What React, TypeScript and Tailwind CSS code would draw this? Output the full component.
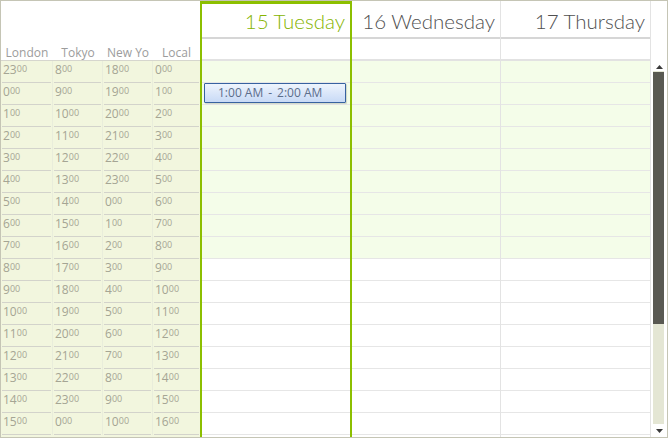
import React from 'react'

const ZONES = [
  { name: 'London', offset: 23, width: 'w-[52px] border-r border-[#e9eddb]' },
  { name: 'Tokyo', offset: 8, width: 'w-[50px] border-r border-[#e9eddb]' },
  { name: 'New York', offset: 18, width: 'w-[50px] border-r border-[#e9eddb]' },
  { name: 'Local', offset: 0, width: 'flex-1' },
]

const DAYS = [
  { title: '15 Tuesday', today: true, col: 'w-[152px] border-x-2 border-[#8cbf00]' },
  { title: '16 Wednesday', today: false, col: 'w-[149px] border-r border-[#e3e3e3]' },
  { title: '17 Thursday', today: false, col: 'w-[150px] border-r border-[#e3e3e3]' },
]

const ROWS = Array.from({ length: 17 }, (_, i) => i)

function Hour({ h }: { h: number }) {
  return (
    <span className="flex items-start leading-[14px]">
      <span className="text-[12px]">{h}</span>
      <span className="text-[9px] leading-[11px]">00</span>
    </span>
  )
}

function TimeRuler() {
  return (
    <div className="flex w-[199px] flex-col">
      {/* zone labels */}
      <div className="flex h-[60px] shrink-0 items-end border-b border-[#d6d6ce] bg-white">
        {ZONES.map((z) => (
          <div key={z.name} className={`${z.width.split(' ')[0]} overflow-hidden whitespace-nowrap text-center text-[12px] leading-[15px] text-[#9c9c9c]`}>
            {z.name === 'New York' ? 'New Yo' : z.name}
          </div>
        ))}
      </div>
      <div className="flex-1 overflow-hidden bg-[#f2f6de]">
        {ROWS.map((i) => (
          <div key={i} className="flex h-[22px]">
            {ZONES.map((z) => (
              <div key={z.name} className={`${z.width} flex h-full`}>
                <div className="mx-[1px] flex flex-1 border-b border-[#d3d3cb] pl-[1px] pt-[2px] text-[#a5a594]">
                  <Hour h={(i + z.offset) % 24} />
                </div>
              </div>
            ))}
          </div>
        ))}
      </div>
    </div>
  )
}

function DayColumn({ day }: { day: (typeof DAYS)[number] }) {
  return (
    <div className={`${day.col} flex flex-col`}>
      <div
        className={`flex h-[38px] shrink-0 items-end justify-end border-b-2 border-b-[#d6d6d6] pb-[3px] pr-[5px] font-['Lato',sans-serif] text-[20.5px] font-light leading-[26px] ${
          day.today ? 'border-t-[3px] border-t-[#8cbf00] text-[#86b400]' : 'text-[#505050]'
        }`}
      >
        {day.title}
      </div>
      <div className="h-[22px] shrink-0 border-b-2 border-[#e2e2e2]" />
      <div className="flex-1 overflow-hidden">
        {ROWS.map((i) => (
          <div key={i} className={`flex h-[22px] items-start border-b border-[#e6e6e6] ${i < 9 ? 'bg-[#f4fde9]' : 'bg-white'}`}>
            {day.today && i === 1 && (
              <div className="ml-[2px] flex h-[20px] w-[142px] items-center rounded-[1px] border border-[#3762a0] bg-gradient-to-b from-[#eef4fd] to-[#c8daf6] pl-[13px] text-[12px] text-[#5b6d8b] shadow-[1px_1px_1px_rgba(0,0,0,0.15)]">
                1:00 AM<span className="mx-[5px]">-</span>2:00 AM
              </div>
            )}
          </div>
        ))}
      </div>
    </div>
  )
}

function ScrollBar() {
  return (
    <div className="flex w-[16px] flex-col bg-white">
      <div className="h-[60px] shrink-0" />
      <div className="flex h-[10px] shrink-0 items-center justify-center pl-[1px] pt-[1px]">
        <svg width="7" height="4" viewBox="0 0 7 4">
          <path d="M3.5 0 L7 4 L0 4 Z" fill="#3a3a3a" />
        </svg>
      </div>
      <div className="ml-[2px] flex w-[11px] flex-1 flex-col bg-[#e4e6d4] pt-[1px]">
        <div className="h-[252px] bg-[#595952]" />
      </div>
      <div className="flex h-[13px] shrink-0 items-center justify-center pl-[1px]">
        <svg width="7" height="4" viewBox="0 0 7 4">
          <path d="M0 0 L7 0 L3.5 4 Z" fill="#3a3a3a" />
        </svg>
      </div>
    </div>
  )
}

export default function App() {
  return (
    <div className="h-[438px] w-[668px] overflow-hidden bg-white font-['Open_Sans',sans-serif]">
      <div className="flex h-full w-full border border-[#c5c5b5]">
        <TimeRuler />
        {DAYS.map((d) => (
          <DayColumn key={d.title} day={d} />
        ))}
        <ScrollBar />
      </div>
    </div>
  )
}
